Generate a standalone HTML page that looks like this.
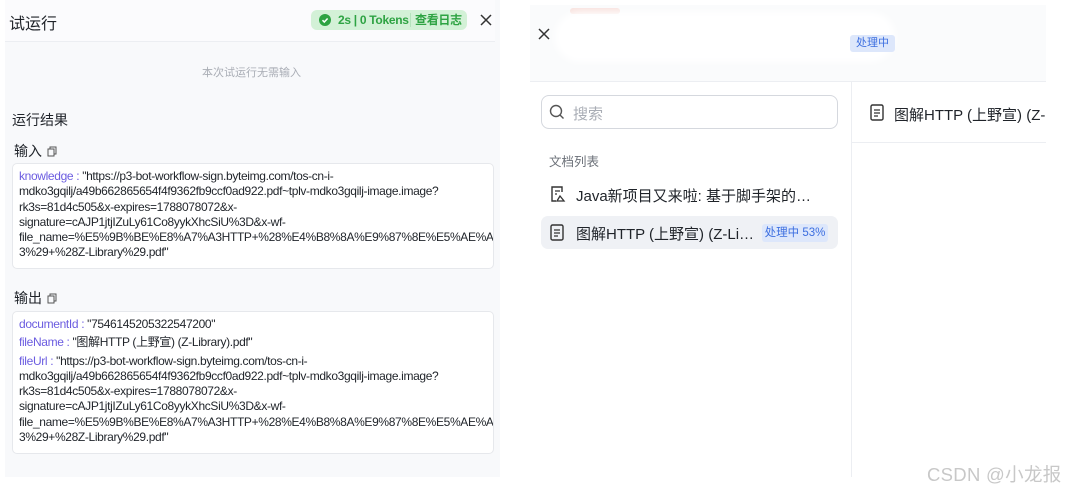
<!DOCTYPE html>
<html><head><meta charset="utf-8"><style>
*{margin:0;padding:0;box-sizing:border-box}
body{width:1070px;height:491px;background:#fff;font-family:"Liberation Sans","Noto Sans CJK SC",sans-serif;position:relative;overflow:hidden;color:#1f2329}
.abs{position:absolute}
.lp{left:5px;top:0;width:495px;height:477px;background:#f8f9fb}
.box{background:#fff;border:1px solid #e6e8ec;border-radius:5px;font-size:12px;letter-spacing:-0.35px;line-height:15.3px;padding:5px 6px;color:#1f2329;white-space:nowrap;overflow:hidden}
.k{color:#6b5ce0}
.t{font-size:14px;color:#1f2329}
.cp{display:inline-block;width:11px;height:11px;position:relative;top:1px;margin-left:5px}
</style></head><body>
<div class="abs lp"></div>
<div class="abs" style="left:5px;top:0;width:490px;height:42px;background:#fbfbfd;border-bottom:1px solid #eceef2"></div>
<div class="abs" style="left:9px;top:10px;font-size:16px;color:#1f2329">试运行</div>
<div class="abs" style="left:311px;top:10px;width:156px;height:20px;background:#d3f1d7;border-radius:6px;font-size:12px;color:#2ea343;font-weight:bold;line-height:20px;letter-spacing:-0.3px">
<span class="abs" style="left:8px;top:4px;width:12px;height:12px;border-radius:50%;background:#2ea343"></span>
<svg class="abs" style="left:8px;top:4px" width="12" height="12"><path d="M3.5 6.2l1.8 1.8 3.3-3.5" stroke="#fff" stroke-width="1.5" fill="none"/></svg>
<span class="abs" style="left:27px">2s | 0 Tokens</span>
<span class="abs" style="left:99px;top:3px;width:1px;height:14px;background:#b5e3bd"></span>
<span class="abs" style="left:104px">查看日志</span></div>
<svg class="abs" style="left:480px;top:14px" width="12" height="12"><path d="M1 1l10 10M11 1L1 11" stroke="#333" stroke-width="1.5"/></svg>
<div class="abs" style="left:202px;top:64px;font-size:11px;color:#a9adb5">本次试运行无需输入</div>
<div class="abs t" style="left:12px;top:110px">运行结果</div>
<div class="abs t" style="left:14px;top:141px">输入<svg class="cp" viewBox="0 0 11 11"><rect x="1" y="3" width="6" height="7" stroke="#555" fill="none"/><path d="M3 3V1h6v7H7" stroke="#555" fill="none"/></svg></div>
<div class="abs box" style="left:12px;top:163px;width:482px;height:106px"><span class="k">knowledge : </span>"https://p3-bot-workflow-sign.byteimg.com/tos-cn-i-<br>mdko3gqilj/a49b662865654f4f9362fb9ccf0ad922.pdf~tplv-mdko3gqilj-image.image?<br>rk3s=81d4c505&amp;x-expires=1788078072&amp;x-<br>signature=cAJP1jtjIZuLy61Co8yykXhcSiU%3D&amp;x-wf-<br>file_name=%E5%9B%BE%E8%A7%A3HTTP+%28%E4%B8%8A%E9%87%8E%E5%AE%A<br>3%29+%28Z-Library%29.pdf"</div>
<div class="abs t" style="left:14px;top:288px">输出<svg class="cp" viewBox="0 0 11 11"><rect x="1" y="3" width="6" height="7" stroke="#555" fill="none"/><path d="M3 3V1h6v7H7" stroke="#555" fill="none"/></svg></div>
<div class="abs box" style="left:12px;top:311px;width:482px;height:143px"><div style="margin-bottom:3px"><span class="k">documentId : </span>"7546145205322547200"</div><div style="margin-bottom:3px"><span class="k">fileName : </span>"图解HTTP (上野宣) (Z-Library).pdf"</div><span class="k">fileUrl : </span>"https://p3-bot-workflow-sign.byteimg.com/tos-cn-i-<br>mdko3gqilj/a49b662865654f4f9362fb9ccf0ad922.pdf~tplv-mdko3gqilj-image.image?<br>rk3s=81d4c505&amp;x-expires=1788078072&amp;x-<br>signature=cAJP1jtjIZuLy61Co8yykXhcSiU%3D&amp;x-wf-<br>file_name=%E5%9B%BE%E8%A7%A3HTTP+%28%E4%B8%8A%E9%87%8E%E5%AE%A<br>3%29+%28Z-Library%29.pdf"</div>

<div class="abs" style="left:530px;top:5px;width:516px;height:77px;background:#fafbfc;border-bottom:1px solid #eceef2"></div>
<div class="abs" style="left:570px;top:8px;width:50px;height:6px;background:#f6c9c0;border-radius:4px;opacity:.5"></div>
<div class="abs" style="left:555px;top:12px;width:340px;height:50px;background:#fff;border-radius:25px;filter:blur(4px)"></div>
<svg class="abs" style="left:538px;top:28px" width="12" height="12"><path d="M1 1l10 10M11 1L1 11" stroke="#333" stroke-width="1.5"/></svg>
<div class="abs" style="left:850px;top:35px;width:45px;height:17px;background:#dde7fb;border-radius:3px;font-size:11px;color:#3d6fe0;text-align:center;line-height:17px">处理中</div>
<div class="abs" style="left:851px;top:82px;width:1px;height:395px;background:#eceef2"></div>
<div class="abs" style="left:852px;top:142px;width:194px;height:1px;background:#eceef2"></div>
<div class="abs" style="left:541px;top:95px;width:297px;height:34px;border:1px solid #d5d8de;border-radius:8px;background:#fff"></div>
<svg class="abs" style="left:549px;top:104px" width="16" height="16"><circle cx="7" cy="7" r="5.5" stroke="#555" stroke-width="1.4" fill="none"/><path d="M11 11l3.5 3.5" stroke="#555" stroke-width="1.4"/></svg>
<div class="abs" style="left:573px;top:103px;font-size:15px;color:#a9adb5">搜索</div>
<div class="abs" style="left:549px;top:151px;font-size:12.5px;color:#6b7078">文档列表</div>
<svg class="abs" style="left:550px;top:185px" width="16" height="18"><path d="M12 7V2H2v14h4" stroke="#333" stroke-width="1.4" fill="none"/><path d="M5 6h5M5 9h2" stroke="#333" stroke-width="1.3"/><path d="M7 16l3-5 4 5z" stroke="#333" stroke-width="1.3" fill="none"/></svg>
<div class="abs" style="left:576px;top:185px;font-size:15px;color:#1f2329">Java新项目又来啦: 基于脚手架的…</div>
<div class="abs" style="left:541px;top:216px;width:297px;height:33px;background:#eff1f5;border-radius:7px"></div>
<svg class="abs" style="left:550px;top:224px" width="14" height="17"><rect x="1" y="1" width="12" height="15" rx="1.5" stroke="#333" stroke-width="1.4" fill="none"/><path d="M4 6h6M4 9h6M4 12h4" stroke="#333" stroke-width="1.2"/></svg>
<div class="abs" style="left:576px;top:223px;font-size:15px;color:#1f2329">图解HTTP (上野宣) (Z-Li…</div>
<div class="abs" style="left:762px;top:224px;width:66px;height:18px;background:#dde7fb;border-radius:3px;font-size:11.5px;color:#3d6fe0;text-align:center;line-height:18px">处理中 53%</div>
<svg class="abs" style="left:870px;top:104px" width="14" height="17"><rect x="1" y="1" width="12" height="15" rx="1.5" stroke="#333" stroke-width="1.4" fill="none"/><path d="M4 6h6M4 9h6M4 12h4" stroke="#333" stroke-width="1.2"/></svg>
<div class="abs" style="left:894px;top:104px;font-size:15px;color:#1f2329;white-space:nowrap;width:152px;overflow:hidden">图解HTTP (上野宣) (Z-Library)</div>
<div class="abs" style="left:927px;top:461px;font-size:18.5px;color:#c8c8c8;letter-spacing:0.3px">CSDN @小龙报</div>
</body></html>
